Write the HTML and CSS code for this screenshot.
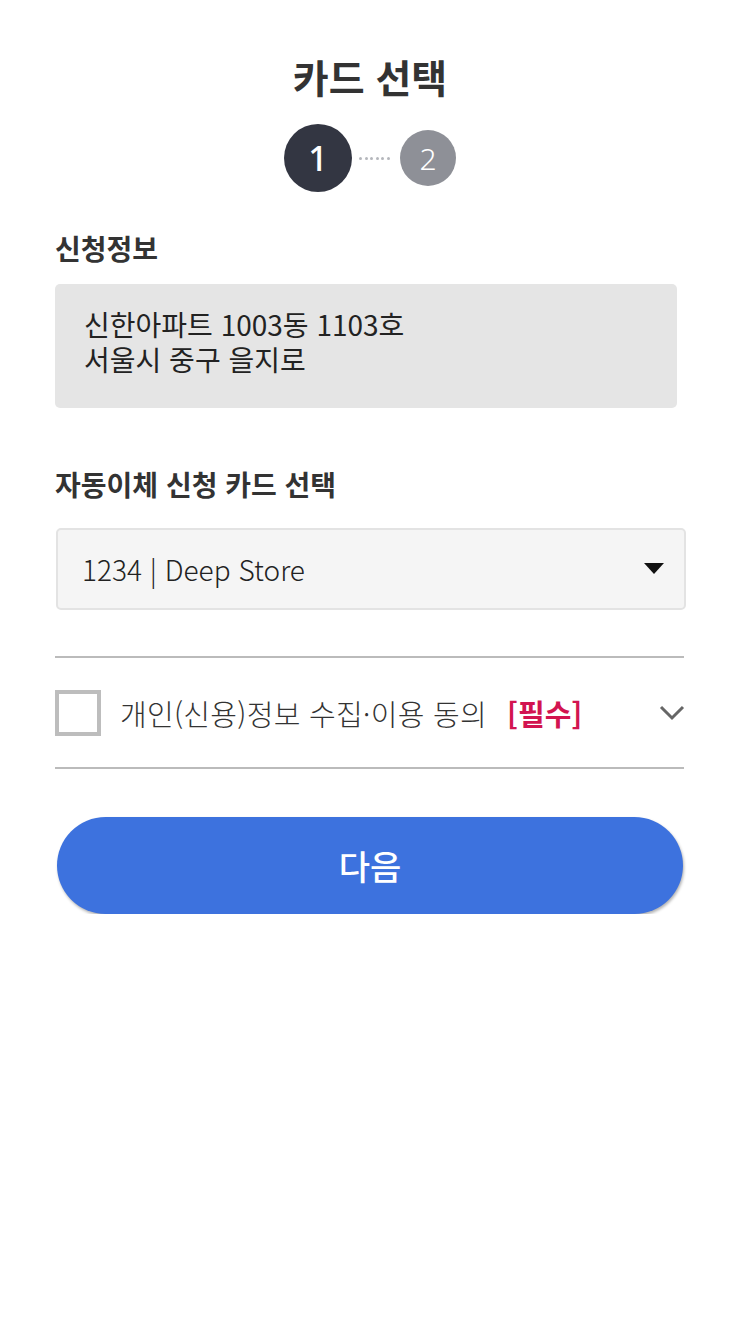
FILE: index.html
```html
<!DOCTYPE html>
<html lang="ko">
<head>
<meta charset="utf-8">
<title>카드 선택</title>
<link rel="stylesheet" href="styles.css">
</head>
<body>
<div class="page">
  <h1 class="title">카드 선택</h1>
  <div class="steps">
    <div class="step step-active">1</div>
    <div class="step-dots"><span></span><span></span><span></span><span></span><span></span><span></span></div>
    <div class="step step-next">2</div>
  </div>

  <h2 class="section-label">신청정보</h2>
  <div class="info-box">
    <p>신한아파트 1003동 1103호</p>
    <p>서울시 중구 을지로</p>
  </div>

  <h2 class="section-label label-card">자동이체 신청 카드 선택</h2>
  <div class="select">
    <span class="select-text">1234 | Deep Store</span>
    <svg class="select-arrow" width="20" height="12" viewBox="0 0 20 12"><path d="M0 0 H20 L10 11 Z" fill="#111"/></svg>
  </div>

  <div class="agree">
    <span class="checkbox"></span>
    <span class="agree-text">개인(신용)정보 수집·이용 동의</span>
    <span class="required">[필수]</span>
    <svg class="chevron" width="26" height="16" viewBox="0 0 26 16"><path d="M2 2 L13 13 L24 2" fill="none" stroke="#666" stroke-width="3"/></svg>
  </div>

  <button class="next-btn" type="button">다음</button>
</div>
</body>
</html>
```

FILE: styles.css
```css
* { box-sizing: border-box; }
html, body { margin: 0; padding: 0; background: #fff; }
body {
  font-family: "Noto Sans CJK KR", "Noto Sans", sans-serif;
  color: #333;
}
.page {
  width: 740px;
  padding: 47px 55px 0 55px;
  display: flex;
  flex-direction: column;
}
.title {
  margin: 0;
  text-align: center;
  font-size: 39px;
  font-weight: 700;
  line-height: 58px;
  color: #333;
}
.steps {
  margin-top: 19px;
  display: flex;
  align-items: center;
  justify-content: center;
}
.step {
  border-radius: 50%;
  display: flex;
  align-items: center;
  justify-content: center;
  color: #fff;
  font-family: "Noto Sans", sans-serif;
  font-weight: 300;
}
.step-active {
  width: 68px; height: 68px;
  background: #333642;
  font-size: 34px;
  font-weight: 500;
}
.step-next {
  width: 56px; height: 56px;
  background: #8e9097;
  font-size: 30px;
  font-weight: 300;
}
.step-dots {
  display: flex;
  gap: 2.6px;
  margin: 0 10px 0 7px;
}
.step-dots span {
  width: 3px; height: 3px; border-radius: 50%;
  background: #b5b7bc;
}
.section-label {
  margin: 36px 0 0 0;
  font-size: 28px;
  font-weight: 700;
  line-height: 40px;
  color: #333;
}
.info-box {
  margin-top: 16px;
  width: 622px;
  height: 124px;
  background: #e5e5e5;
  border-radius: 5px;
  padding: 23px 29px;
}
.info-box p {
  margin: 0;
  font-size: 28px;
  line-height: 35px;
  font-weight: 400;
  color: #222;
}
.label-card { margin-top: 56px; }
.select {
  margin-top: 24px;
  margin-left: 1px;
  width: 630px;
  height: 82px;
  background: #f5f5f5;
  border: 2px solid #e3e3e3;
  border-radius: 5px;
  display: flex;
  align-items: center;
  justify-content: space-between;
  padding: 0 20px 0 24px;
}
.select-text {
  font-size: 28px;
  font-weight: 300;
  color: #222;
}
.agree {
  margin-top: 46px;
  border-top: 2px solid #bbb;
  border-bottom: 2px solid #bbb;
  height: 113px;
  display: flex;
  align-items: center;
  width: 629px;
}
.checkbox {
  width: 46px; height: 46px;
  border: 4px solid #bdbdbd;
  flex: none;
}
.agree-text {
  margin-left: 19px;
  font-size: 29px;
  font-weight: 300;
  color: #333;
  letter-spacing: 0.3px;
}
.required {
  margin-left: 20px;
  font-size: 29px;
  font-weight: 700;
  color: #d21450;
}
.chevron { margin-left: auto; margin-right: -1px; }
.next-btn {
  margin-top: 48px;
  margin-left: 2px;
  width: 626px;
  height: 97px;
  border: none;
  border-radius: 49px;
  background: #3d72de;
  color: #fff;
  font-family: "Noto Sans CJK KR", sans-serif;
  font-size: 34px;
  font-weight: 500;
  box-shadow: 1px 2px 3px rgba(0,0,0,0.3);
}
```
